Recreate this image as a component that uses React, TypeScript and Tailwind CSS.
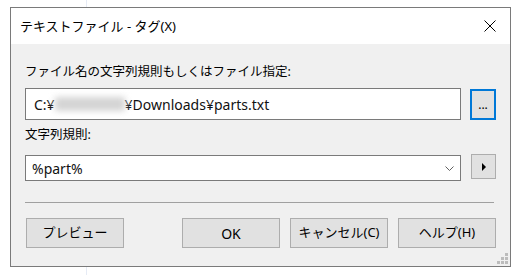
const font = { fontFamily: '"Noto Sans", "Noto Sans CJK JP", sans-serif' }

function Btn({ label, className = '' }: { label: string; className?: string }) {
  return (
    <button
      className={`h-[30px] w-[98px] border border-[#adadad] bg-[#e1e1e1] text-[13px] text-black flex items-center justify-center ${className}`}
    >
      {label}
    </button>
  )
}

export default function App() {
  return (
    <div className="relative w-[521px] h-[275px] bg-white pt-[7px] pl-[10px]" style={font}>
      <div className="absolute left-[86px] top-0 h-full w-px bg-[#e6ebf5]" />
      <div className="relative w-[501px] h-[260px] border border-[#7a7a7a] flex flex-col">
        {/* title bar */}
        <div className="h-[36px] bg-white flex items-center justify-between pl-[9px] pr-[14px]">
          <span className="text-[13px] text-black leading-none">テキストファイル - タグ(X)</span>
          <svg width="12" height="12" viewBox="0 0 12 12">
            <path d="M0.5 0.5 L11.5 11.5 M11.5 0.5 L0.5 11.5" stroke="#000" strokeWidth="1" />
          </svg>
        </div>

        {/* body */}
        <div className="relative flex-1 bg-[#f0f0f0] px-[14px] flex flex-col">
          <div className="mt-[20px] h-[16px] text-[12.5px] leading-[16px] text-black">
            ファイル名の文字列規則もしくはファイル指定:
          </div>
          <div className="mt-[8px] flex items-start gap-[9px]">
            <div className="w-[436px] h-[32px] border border-[#7a7a7a] bg-white flex items-center pl-[8px] text-[14px] text-[#111]">
              <span>C:¥</span>
              <span className="inline-block w-[70px] h-[14px] bg-[#d4d4d4] blur-[3px]" />
              <span>¥Downloads¥parts.txt</span>
            </div>
            <button className="mt-px w-[26px] h-[31px] border-2 border-[#0078d7] bg-[#e1e1e1] text-[12px] text-black leading-none flex items-center justify-center">
              ...
            </button>
          </div>

          <div className="mt-[7px] h-[16px] text-[12.5px] leading-[16px] text-black">文字列規則:</div>
          <div className="mt-[11px] flex items-start gap-[10px]">
            <div className="mt-px w-[436px] h-[26px] border border-[#7a7a7a] bg-white flex items-center justify-between pl-[6px] pr-[6px] text-[14px] text-[#111]">
              <span>%part%</span>
              <svg width="9" height="5" viewBox="0 0 9 5">
                <path d="M0.5 0.5 L4.5 4.5 L8.5 0.5" stroke="#606060" fill="none" strokeWidth="1" />
              </svg>
            </div>
            <button className="w-[25px] h-[25px] border border-[#adadad] bg-[#e1e1e1] flex items-center justify-center">
              <svg width="4" height="8" viewBox="0 0 4 8">
                <path d="M0 0 L4 4 L0 8 Z" fill="#000" />
              </svg>
            </button>
          </div>

          <div className="mt-[21px] w-[469px] h-px bg-[#a0a0a0]" />

          <div className="mt-[15px] flex">
            <Btn label="プレビュー" className="ml-px" />
            <Btn label="OK" className="ml-[58px] text-[14px]" />
            <Btn label="キャンセル(C)" className="ml-[10px]" />
            <Btn label="ヘルプ(H)" className="ml-[10px]" />
          </div>

          <svg className="absolute right-[2px] bottom-[2px]" width="11" height="11" viewBox="0 0 11 11">
            <rect x="8" y="0" width="3" height="3" fill="#bcbcbc" />
            <rect x="4" y="4" width="3" height="3" fill="#bcbcbc" />
            <rect x="8" y="4" width="3" height="3" fill="#bcbcbc" />
            <rect x="0" y="8" width="3" height="3" fill="#bcbcbc" />
            <rect x="4" y="8" width="3" height="3" fill="#bcbcbc" />
            <rect x="8" y="8" width="3" height="3" fill="#bcbcbc" />
          </svg>
        </div>
      </div>
    </div>
  )
}
